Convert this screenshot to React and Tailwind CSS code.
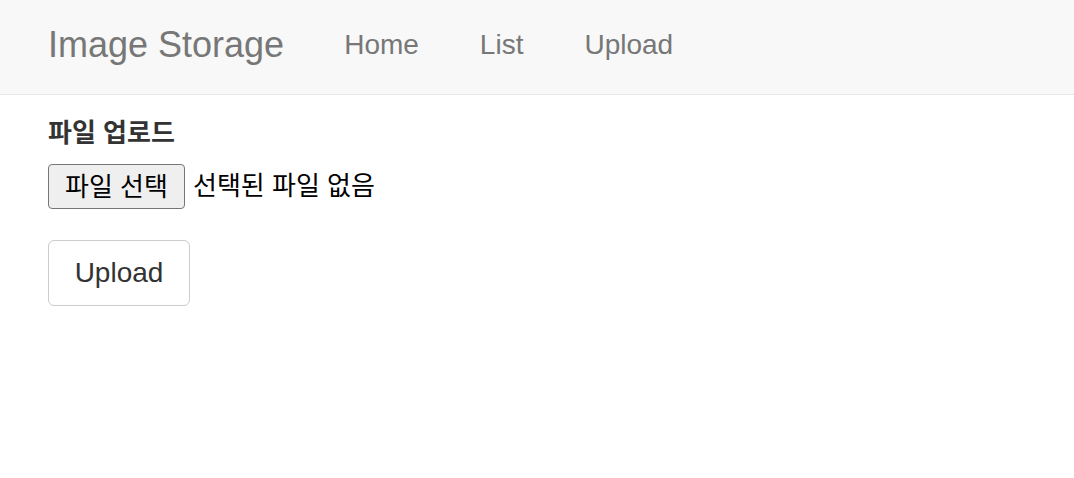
export default function App() {
  const font = { fontFamily: '"Liberation Sans", "Noto Sans CJK KR", sans-serif' };

  return (
    <div className="min-h-screen bg-white text-[#333]" style={font}>
      <nav className="h-[95px] bg-[#f8f8f8] border-b border-[#e7e7e7] flex items-center pl-[48px] pb-[4px]">
        <a className="text-[36px] text-[#777] leading-none mr-[60px]">Image Storage</a>
        <ul className="flex items-center gap-[61px] text-[28px] text-[#777] leading-none">
          <li>Home</li>
          <li>List</li>
          <li>Upload</li>
        </ul>
      </nav>

      <div className="pl-[48px] pt-[21px]">
        <div className="text-[26px] font-bold leading-[34px]">파일 업로드</div>
        <div className="mt-[14px] flex items-center">
          <button className="h-[45px] w-[137px] bg-[#efefef] border border-[#767676] rounded-[4px] text-[26px] text-black leading-none">
            파일 선택
          </button>
          <span className="ml-[8px] text-[26px] text-black">선택된 파일 없음</span>
        </div>
        <button className="mt-[31px] h-[66px] w-[142px] border border-[#ccc] rounded-[6px] bg-white text-[28px] text-[#333] leading-none">
          Upload
        </button>
      </div>
    </div>
  );
}
